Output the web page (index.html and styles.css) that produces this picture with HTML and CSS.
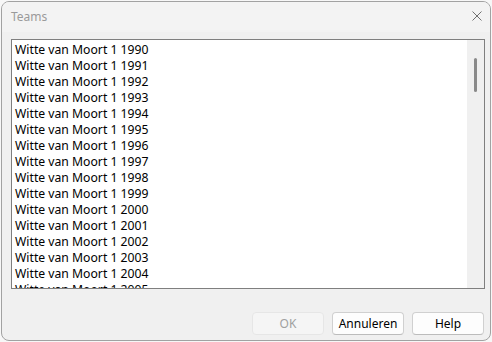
FILE: index.html
```html
<!DOCTYPE html>
<html>
<head>
  <title>Teams</title>
  <meta charset="UTF-8">
  <link rel="stylesheet" href="styles.css">
</head>
<body>
  <div class="window">
    <div class="titlebar">
      <span class="title">Teams</span>
      <svg class="close" width="10" height="10" viewBox="0 0 10 10">
        <path d="M0.5 0.5 L9.5 9.5 M9.5 0.5 L0.5 9.5" stroke="#707070" stroke-width="1" fill="none"/>
      </svg>
    </div>

    <div class="content">
      <div class="listbox">
        <div class="items" id="items"></div>
        <div class="scrollbar"><div class="thumb"></div></div>
      </div>

      <div class="buttons">
        <button class="btn" disabled>OK</button>
        <button class="btn">Annuleren</button>
        <button class="btn">Help</button>
      </div>
    </div>
  </div>

  <script>
    const items = document.getElementById("items");
    for (let year = 1990; year <= 2005; year++) {
      const row = document.createElement("div");
      row.className = "item";
      row.innerText = `Witte van Moort 1 ${year}`;
      items.appendChild(row);
    }
  </script>
</body>
</html>
```

FILE: styles.css
```css
body { margin: 0; background: #f7f7f7; font-family: "Noto Sans", Arial, sans-serif; font-size: 12px; }
.window { margin: 1px 0 0 1px; width: 490px; height: 340px; box-sizing: border-box; border: 1px solid #a2a2a2; border-radius: 8px; background: #f0f0f0; display: flex; flex-direction: column; overflow: hidden; }
.titlebar { height: 30px; flex: none; background: #f3f3f3; display: flex; align-items: center; justify-content: space-between; padding: 0 8px 0 9px; }
.title { color: #9a9a9a; margin-top: -2px; }
.close { margin-top: -2px; }
.content { flex: 1; display: flex; flex-direction: column; padding: 7px 5px 5px 9px; }
.listbox { height: 250px; box-sizing: border-box; border: 1px solid #7f7f7f; background: #fff; display: flex; overflow: hidden; }
.items { flex: 1; padding: 2px 0 0 3px; overflow: hidden; }
.item { height: 16px; line-height: 16px; font-size: 12.2px; color: #000; white-space: nowrap; }
.scrollbar { width: 17px; flex: none; background: #f0f0f0; position: relative; }
.thumb { position: absolute; left: 7px; top: 18px; width: 3px; height: 34px; border-radius: 2px; background: #8a8a8a; }
.buttons { margin-top: auto; display: flex; justify-content: flex-end; gap: 8px; padding-right: 1px; }
.btn { width: 72px; height: 23px; font-family: inherit; font-size: 12px; color: #000; background: #fdfdfd; border: 1px solid #d0d0d0; border-bottom-color: #bcbcbc; border-radius: 4px; padding: 0 0 1px; }
.btn:disabled { color: #a0a0a0; background: #f5f5f5; border-color: #e6e6e6; }
```
